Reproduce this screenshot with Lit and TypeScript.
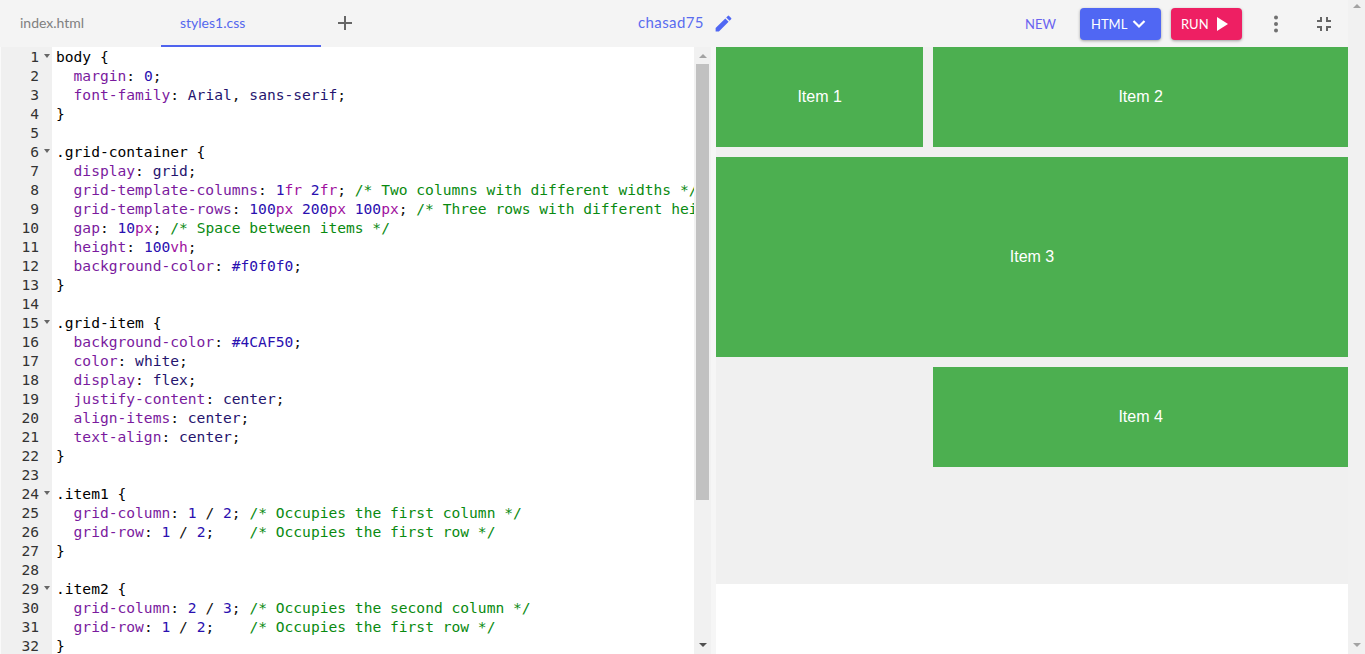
import { LitElement, html, css } from "lit";
import { customElement } from "lit/decorators.js";

const CODE = `body {
  margin: 0;
  font-family: Arial, sans-serif;
}

.grid-container {
  display: grid;
  grid-template-columns: 1fr 2fr; /* Two columns with different widths */
  grid-template-rows: 100px 200px 100px; /* Three rows with different heights */
  gap: 10px; /* Space between items */
  height: 100vh;
  background-color: #f0f0f0;
}

.grid-item {
  background-color: #4CAF50;
  color: white;
  display: flex;
  justify-content: center;
  align-items: center;
  text-align: center;
}

.item1 {
  grid-column: 1 / 2; /* Occupies the first column */
  grid-row: 1 / 2;    /* Occupies the first row */
}

.item2 {
  grid-column: 2 / 3; /* Occupies the second column */
  grid-row: 1 / 2;    /* Occupies the first row */
}`.split("\n");

const FOLDS = new Set([1, 6, 15, 24, 29]);

function tokens(line: string) {
  const prop = line.match(/^(\s+)([a-z-]+)(:)(.*)$/);
  if (!prop) return html`<span class="sel">${line}</span>`;
  const out: unknown[] = [prop[1], html`<span class="prop">${prop[2]}</span>`, html`<span class="pun">:</span>`];
  const re = /(\/\*.*?\*\/)|(#[0-9a-fA-F]+)|(\d+)([a-z]+)?|([a-zA-Z-]+)|([^\s\w#/-]+|\/|\s+)/g;
  let m: RegExpExecArray | null;
  while ((m = re.exec(prop[4]))) {
    if (m[1]) out.push(html`<span class="com">${m[1]}</span>`);
    else if (m[2]) out.push(html`<span class="num">${m[2]}</span>`);
    else if (m[3]) {
      out.push(html`<span class="num">${m[3]}</span>`);
      if (m[4]) out.push(html`<span class="unit">${m[4]}</span>`);
    } else if (m[5]) out.push(html`<span class="val">${m[5]}</span>`);
    else out.push(html`<span class="pun">${m[6]}</span>`);
  }
  return out;
}

@customElement("app-root")
export class AppRoot extends LitElement {
  static styles = css`
    :host { display: block; height: 654px; overflow: hidden; background: #fff; }
    .page { display: flex; height: 654px; }
    .main { flex: 1; min-width: 0; display: flex; flex-direction: column; }
    .top { height: 47px; flex: none; display: flex; align-items: center; background: #f4f4f4; font-family: Lato, sans-serif; font-size: 14px; }
    .tab { width: 160px; height: 47px; box-sizing: border-box; padding: 0 0 3px 20px; display: flex; align-items: center; color: #808080; }
    .tab.on { margin-left: 1px; padding-left: 19px; color: #5468ee; border-bottom: 2px solid #4f63ee; padding-bottom: 1px; }
    .plus { margin-left: 16px; width: 16px; height: 16px; flex: none; display: block; margin-top: -1px; }
    .user { margin-left: 285px; margin-top: -3px; display: flex; align-items: center; gap: 11px; color: #5a6cf0; font-size: 15px; letter-spacing: 0.4px; }
    .user svg { width: 21px; height: 21px; display: block; margin: 3px 0 0 -2px; }
    .actions { margin-left: auto; display: flex; align-items: center; }
    .new { color: #6a63f0; font-size: 13px; margin-right: 24px; }
    .btn { height: 32px; box-sizing: border-box; border-radius: 4px; color: #fff; display: flex; align-items: center; font-size: 13px; box-shadow: 0 1px 3px rgba(0,0,0,.35); }
    .html { width: 81px; background: #5067f3; padding-left: 11px; gap: 5px; }
    .run { width: 71px; background: #ee1f63; padding-left: 10px; gap: 8px; margin-left: 10px; }
    .dots { margin-left: 26px; width: 16px; height: 18px; display: block; }
    .shrink { margin-left: 28px; margin-right: 12px; width: 24px; height: 24px; display: block; }
    .body { flex: 1; min-height: 0; display: flex; }
    .editor { width: 694px; flex: none; display: flex; overflow: hidden; background: #fff; }
    .gutter { width: 52px; flex: none; background: #f0f0f0; border-left: 1px solid #fafafa; box-sizing: border-box; }
    .ln { height: 19px; position: relative; box-sizing: border-box; padding-right: 13px; text-align: right; font: 14.6px/19px "DejaVu Sans Mono", monospace; color: #333; }
    .fold { position: absolute; left: 43px; top: 7px; width: 0; height: 0; border: 3px solid transparent; border-top: 4px solid #666; border-bottom: 0; }
    .code { flex: 1; min-width: 0; overflow: hidden; padding-left: 4px; font: 14.6px/19px "DejaVu Sans Mono", monospace; color: #000; }
    .line { height: 19px; white-space: pre; }
    .sel { color: #000; }
    .prop { color: #7a1a9e; }
    .pun { color: #111; }
    .val { color: #25146e; }
    .num { color: #2a10b0; }
    .unit { color: #a0109e; }
    .com { color: #098a10; }
    .sb { flex: none; background: #f1f1f1; position: relative; }
    .sb1 { width: 17px; }
    .gap { width: 5px; flex: none; background: #f6f6f6; }
    .thumb { position: absolute; left: 2px; right: 2px; top: 17px; height: 436px; background: #c1c1c1; }
    .up, .down { position: absolute; left: 50%; margin-left: -4px; width: 0; height: 0; border: 4px solid transparent; }
    .up { border-bottom: 4px solid #a3a3a3; border-top: 0; }
    .down { border-top: 4px solid #505050; border-bottom: 0; }
    .e-up { top: 7px; }
    .e-down { top: 596px; }
    .preview { flex: 1; min-width: 0; display: flex; flex-direction: column; background: #fff; }
    .grid { height: 537px; flex: none; box-sizing: border-box; background: #f0f0f0; display: grid; grid-template-columns: 1fr 2fr; grid-template-rows: 100px 200px 100px; gap: 10px; font: 16px "Liberation Sans", Arial, sans-serif; }
    .item { background: #4caf50; color: #fff; display: flex; align-items: center; justify-content: center; }
    .i2 { grid-column: 2 / 3; }
    .i3 { grid-column: 1 / 3; }
    .i4 { grid-column: 2 / 3; }
    .page-sb { width: 17px; flex: none; background: #f1f1f1; position: relative; }
    .p-up { top: 4px; border-bottom-color: #a3a3a3; }
    .p-down { top: 643px; border-top-color: #a3a3a3; }
  `;

  render() {
    return html`<div class="page">
      <div class="main">
        <div class="top">
          <div class="tab">index.html</div>
          <div class="tab on">styles1.css</div>
          <svg class="plus" viewBox="0 0 16 16"><path d="M8 1v14M1 8h14" stroke="#666" stroke-width="2" fill="none"/></svg>
          <div class="user">chasad75
            <svg viewBox="0 0 24 24"><path fill="#5067f3" d="M3 17.25V21h3.75L17.81 9.94l-3.75-3.75L3 17.25zM20.71 7.04a1 1 0 0 0 0-1.41l-2.34-2.34a1 1 0 0 0-1.41 0l-1.83 1.83 3.75 3.75 1.83-1.83z"/></svg>
          </div>
          <div class="actions">
            <div class="new">NEW</div>
            <div class="btn html">HTML
              <svg width="14" height="10" viewBox="0 0 14 10"><path d="M1.5 2l5.5 5.5L12.500 2" stroke="#fff" stroke-width="2.2" fill="none"/></svg>
            </div>
            <div class="btn run">RUN
              <svg width="11" height="14" viewBox="0 0 11 14"><path d="M0 0l11 7-11 7z" fill="#fff"/></svg>
            </div>
            <svg class="dots" viewBox="0 0 16 18"><g fill="#707070"><circle cx="8" cy="2.500" r="2"/><circle cx="8" cy="9" r="2"/><circle cx="8" cy="15.500" r="2"/></g></svg>
            <svg class="shrink" viewBox="0 0 24 24"><path fill="#666" d="M5 16h3v3h2v-5H5v2zm3-8H5v2h5V5H8v3zm6 11h2v-3h3v-2h-5v5zm2-11V5h-2v5h5V8h-3z"/></svg>
          </div>
        </div>
        <div class="body">
          <div class="editor">
            <div class="gutter">
              ${CODE.map((_, i) => html`<div class="ln">${i + 1}${FOLDS.has(i + 1) ? html`<span class="fold"></span>` : ""}</div>`)}
            </div>
            <div class="code">
              ${CODE.map((l) => html`<div class="line">${tokens(l)}</div>`)}
            </div>
          </div>
          <div class="sb sb1">
            <div class="up e-up"></div>
            <div class="thumb"></div>
            <div class="down e-down"></div>
          </div>
          <div class="gap"></div>
          <div class="preview">
            <div class="grid">
              <div class="item">Item 1</div>
              <div class="item i2">Item 2</div>
              <div class="item i3">Item 3</div>
              <div class="item i4">Item 4</div>
            </div>
          </div>
        </div>
      </div>
      <div class="page-sb">
        <div class="up p-up"></div>
        <div class="down p-down"></div>
      </div>
    </div>`;
  }
}
